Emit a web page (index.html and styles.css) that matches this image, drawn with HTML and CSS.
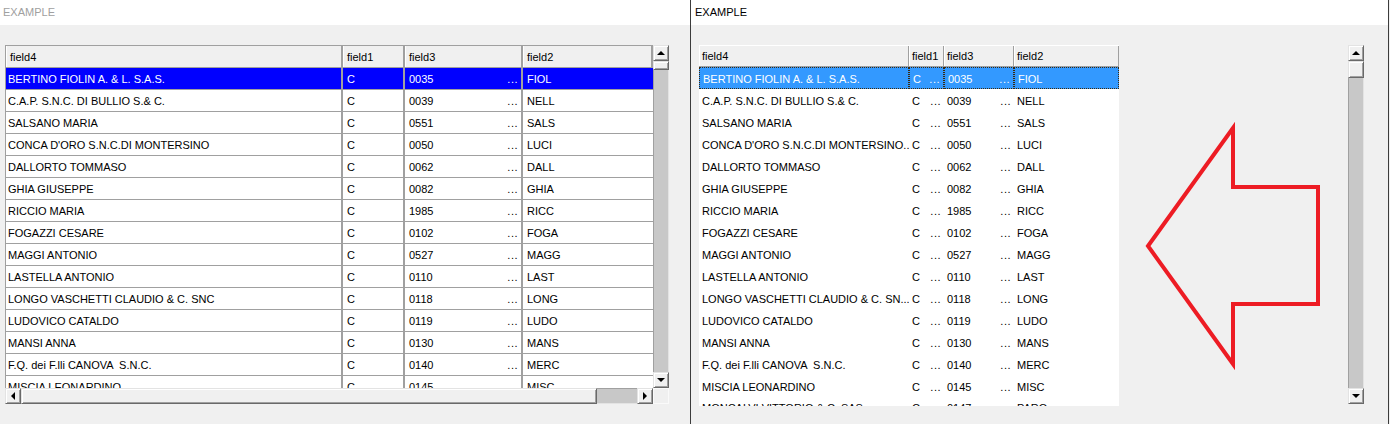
FILE: index.html
```html
<!DOCTYPE html>
<html lang="en">
<head>
  <meta charset="UTF-8" />
  <title>EXAMPLE</title>
  <link rel="stylesheet" href="styles.css">
</head>
<body>
<div class="desktop">

  <section class="window window-left">
    <div class="titlebar inactive">EXAMPLE</div>
    <div class="client client-left">
      <div class="lgrid">
        <div class="lgrid-view">
          <div class="lrow lhead">
            <div class="lcell">field4</div>
            <div class="lcell">field1</div>
            <div class="lcell">field3</div>
            <div class="lcell">field2</div>
          </div>
          <div class="lrow selected">
            <div class="lcell">BERTINO FIOLIN A. &amp; L. S.A.S.</div>
            <div class="lcell">C</div>
            <div class="lcell"><span>0035</span><span class="dots">...</span></div>
            <div class="lcell">FIOL</div>
          </div>
          <div class="lrow">
            <div class="lcell">C.A.P. S.N.C. DI BULLIO S.&amp; C.</div>
            <div class="lcell">C</div>
            <div class="lcell"><span>0039</span><span class="dots">...</span></div>
            <div class="lcell">NELL</div>
          </div>
          <div class="lrow">
            <div class="lcell">SALSANO MARIA</div>
            <div class="lcell">C</div>
            <div class="lcell"><span>0551</span><span class="dots">...</span></div>
            <div class="lcell">SALS</div>
          </div>
          <div class="lrow">
            <div class="lcell">CONCA D'ORO S.N.C.DI MONTERSINO</div>
            <div class="lcell">C</div>
            <div class="lcell"><span>0050</span><span class="dots">...</span></div>
            <div class="lcell">LUCI</div>
          </div>
          <div class="lrow">
            <div class="lcell">DALLORTO TOMMASO</div>
            <div class="lcell">C</div>
            <div class="lcell"><span>0062</span><span class="dots">...</span></div>
            <div class="lcell">DALL</div>
          </div>
          <div class="lrow">
            <div class="lcell">GHIA GIUSEPPE</div>
            <div class="lcell">C</div>
            <div class="lcell"><span>0082</span><span class="dots">...</span></div>
            <div class="lcell">GHIA</div>
          </div>
          <div class="lrow">
            <div class="lcell">RICCIO MARIA</div>
            <div class="lcell">C</div>
            <div class="lcell"><span>1985</span><span class="dots">...</span></div>
            <div class="lcell">RICC</div>
          </div>
          <div class="lrow">
            <div class="lcell">FOGAZZI CESARE</div>
            <div class="lcell">C</div>
            <div class="lcell"><span>0102</span><span class="dots">...</span></div>
            <div class="lcell">FOGA</div>
          </div>
          <div class="lrow">
            <div class="lcell">MAGGI ANTONIO</div>
            <div class="lcell">C</div>
            <div class="lcell"><span>0527</span><span class="dots">...</span></div>
            <div class="lcell">MAGG</div>
          </div>
          <div class="lrow">
            <div class="lcell">LASTELLA ANTONIO</div>
            <div class="lcell">C</div>
            <div class="lcell"><span>0110</span><span class="dots">...</span></div>
            <div class="lcell">LAST</div>
          </div>
          <div class="lrow">
            <div class="lcell">LONGO VASCHETTI CLAUDIO &amp; C. SNC</div>
            <div class="lcell">C</div>
            <div class="lcell"><span>0118</span><span class="dots">...</span></div>
            <div class="lcell">LONG</div>
          </div>
          <div class="lrow">
            <div class="lcell">LUDOVICO CATALDO</div>
            <div class="lcell">C</div>
            <div class="lcell"><span>0119</span><span class="dots">...</span></div>
            <div class="lcell">LUDO</div>
          </div>
          <div class="lrow">
            <div class="lcell">MANSI ANNA</div>
            <div class="lcell">C</div>
            <div class="lcell"><span>0130</span><span class="dots">...</span></div>
            <div class="lcell">MANS</div>
          </div>
          <div class="lrow">
            <div class="lcell">F.Q. dei F.lli CANOVA &nbsp;S.N.C.</div>
            <div class="lcell">C</div>
            <div class="lcell"><span>0140</span><span class="dots">...</span></div>
            <div class="lcell">MERC</div>
          </div>
          <div class="lrow">
            <div class="lcell">MISCIA LEONARDINO</div>
            <div class="lcell">C</div>
            <div class="lcell"><span>0145</span><span class="dots">...</span></div>
            <div class="lcell">MISC</div>
          </div>
        </div>

        <div class="vscroll">
          <div class="sb-btn"><span class="tri tri-up"></span></div>
          <div class="sb-thumb small"></div>
          <div class="sb-track"></div>
          <div class="sb-btn"><span class="tri tri-down"></span></div>
        </div>
        <div class="hscroll">
          <div class="sb-btn"><span class="tri tri-left"></span></div>
          <div class="sb-thumb wide"></div>
          <div class="sb-track"></div>
          <div class="sb-btn"><span class="tri tri-right"></span></div>
        </div>
        <div class="corner"></div>
      </div>
    </div>
  </section>

  <section class="window window-right">
    <div class="titlebar">EXAMPLE</div>
    <div class="client client-right">
      <div class="rgrid">
        <div class="rrow rhead">
          <div class="rcell">field4</div>
          <div class="rcell">field1</div>
          <div class="rcell">field3</div>
          <div class="rcell">field2</div>
        </div>
        <div class="rrow selected">
          <div class="rcell">BERTINO FIOLIN A. &amp; L. S.A.S.</div>
          <div class="rcell"><span>C</span><span class="dots">...</span></div>
          <div class="rcell"><span>0035</span><span class="dots">...</span></div>
          <div class="rcell">FIOL</div>
        </div>
        <div class="rrow">
          <div class="rcell">C.A.P. S.N.C. DI BULLIO S.&amp; C.</div>
          <div class="rcell"><span>C</span><span class="dots">...</span></div>
          <div class="rcell"><span>0039</span><span class="dots">...</span></div>
          <div class="rcell">NELL</div>
        </div>
        <div class="rrow">
          <div class="rcell">SALSANO MARIA</div>
          <div class="rcell"><span>C</span><span class="dots">...</span></div>
          <div class="rcell"><span>0551</span><span class="dots">...</span></div>
          <div class="rcell">SALS</div>
        </div>
        <div class="rrow">
          <div class="rcell">CONCA D'ORO S.N.C.DI MONTERSINO...</div>
          <div class="rcell"><span>C</span><span class="dots">...</span></div>
          <div class="rcell"><span>0050</span><span class="dots">...</span></div>
          <div class="rcell">LUCI</div>
        </div>
        <div class="rrow">
          <div class="rcell">DALLORTO TOMMASO</div>
          <div class="rcell"><span>C</span><span class="dots">...</span></div>
          <div class="rcell"><span>0062</span><span class="dots">...</span></div>
          <div class="rcell">DALL</div>
        </div>
        <div class="rrow">
          <div class="rcell">GHIA GIUSEPPE</div>
          <div class="rcell"><span>C</span><span class="dots">...</span></div>
          <div class="rcell"><span>0082</span><span class="dots">...</span></div>
          <div class="rcell">GHIA</div>
        </div>
        <div class="rrow">
          <div class="rcell">RICCIO MARIA</div>
          <div class="rcell"><span>C</span><span class="dots">...</span></div>
          <div class="rcell"><span>1985</span><span class="dots">...</span></div>
          <div class="rcell">RICC</div>
        </div>
        <div class="rrow">
          <div class="rcell">FOGAZZI CESARE</div>
          <div class="rcell"><span>C</span><span class="dots">...</span></div>
          <div class="rcell"><span>0102</span><span class="dots">...</span></div>
          <div class="rcell">FOGA</div>
        </div>
        <div class="rrow">
          <div class="rcell">MAGGI ANTONIO</div>
          <div class="rcell"><span>C</span><span class="dots">...</span></div>
          <div class="rcell"><span>0527</span><span class="dots">...</span></div>
          <div class="rcell">MAGG</div>
        </div>
        <div class="rrow">
          <div class="rcell">LASTELLA ANTONIO</div>
          <div class="rcell"><span>C</span><span class="dots">...</span></div>
          <div class="rcell"><span>0110</span><span class="dots">...</span></div>
          <div class="rcell">LAST</div>
        </div>
        <div class="rrow">
          <div class="rcell">LONGO VASCHETTI CLAUDIO &amp; C. SN...</div>
          <div class="rcell"><span>C</span><span class="dots">...</span></div>
          <div class="rcell"><span>0118</span><span class="dots">...</span></div>
          <div class="rcell">LONG</div>
        </div>
        <div class="rrow">
          <div class="rcell">LUDOVICO CATALDO</div>
          <div class="rcell"><span>C</span><span class="dots">...</span></div>
          <div class="rcell"><span>0119</span><span class="dots">...</span></div>
          <div class="rcell">LUDO</div>
        </div>
        <div class="rrow">
          <div class="rcell">MANSI ANNA</div>
          <div class="rcell"><span>C</span><span class="dots">...</span></div>
          <div class="rcell"><span>0130</span><span class="dots">...</span></div>
          <div class="rcell">MANS</div>
        </div>
        <div class="rrow">
          <div class="rcell">F.Q. dei F.lli CANOVA &nbsp;S.N.C.</div>
          <div class="rcell"><span>C</span><span class="dots">...</span></div>
          <div class="rcell"><span>0140</span><span class="dots">...</span></div>
          <div class="rcell">MERC</div>
        </div>
        <div class="rrow">
          <div class="rcell">MISCIA LEONARDINO</div>
          <div class="rcell"><span>C</span><span class="dots">...</span></div>
          <div class="rcell"><span>0145</span><span class="dots">...</span></div>
          <div class="rcell">MISC</div>
        </div>
        <div class="rrow">
          <div class="rcell">MONCALVI VITTORIO &amp; C. SAS</div>
          <div class="rcell"><span>C</span><span class="dots">...</span></div>
          <div class="rcell"><span>0147</span><span class="dots">...</span></div>
          <div class="rcell">PARO</div>
        </div>
      </div>

      <div class="vscroll tall">
        <div class="sb-btn"><span class="tri tri-up"></span></div>
        <div class="sb-thumb"></div>
        <div class="sb-track"></div>
        <div class="sb-btn"><span class="tri tri-down"></span></div>
      </div>
    </div>
  </section>

  <!-- red arrow drawn on top of the screenshot -->
  <svg class="annotation" width="1390" height="424" viewBox="0 0 1390 424">
    <polygon points="1148,246 1233,128 1233,187 1318,187 1318,304 1233,304 1233,364"
             fill="none" stroke="#ed1c24" stroke-width="4" stroke-linejoin="miter" />
  </svg>

</div>
</body>
</html>
```

FILE: styles.css
```css
body {
  margin: 0;
  background: #f0f0f0;
  font-family: "Liberation Sans", Arial, sans-serif;
  font-size: 11px;
  color: #000;
}

.desktop {
  position: relative;
  display: flex;
  width: 1390px;
  height: 424px;
  overflow: hidden;
}

.window {
  display: flex;
  flex-direction: column;
  height: 424px;
  background: #f0f0f0;
  box-sizing: border-box;
}

.window-left {
  width: 690px;
}

.window-right {
  width: 699px;
  border-left: 1px solid #3c3c3c;
  border-right: 1px solid #3c3c3c;
}

.titlebar {
  height: 25px;
  line-height: 24px;
  background: #fff;
  padding-left: 4px;
  font-size: 11px;
  color: #000;
}

.titlebar.inactive {
  color: #a0a0a0;
  padding-left: 3px;
}

.client {
  flex: 1;
  display: flex;
}

.client-left {
  padding: 20px 0 0 5px;
}

.client-right {
  padding: 20px 24px 0 8px;
  justify-content: space-between;
  align-items: flex-start;
}

/* ---------- left grid (classic look) ---------- */

.lgrid {
  display: grid;
  grid-template-columns: 648px 16px;
  grid-template-rows: 343px 16px;
}

.lgrid-view {
  overflow: hidden;
  background: #fff;
  border-left: 1px solid #a0a0a0;
  box-sizing: border-box;
}

.lrow {
  display: grid;
  grid-template-columns: 337px 62px 118px 130px;
  height: 22px;
  box-sizing: border-box;
  border-bottom: 1px solid #a0a0a0;
}

.lcell {
  display: flex;
  align-items: center;
  justify-content: space-between;
  padding: 1px 3px 0 4px;
  border-right: 2px solid #a0a0a0;
  white-space: nowrap;
  overflow: hidden;
}

.lrow .lcell:first-child {
  padding-left: 2px;
}

.lrow .lcell:last-child {
  border-right: none;
}

.lhead {
  height: 23px;
  background: #f0f0f0;
  border-top: 1px solid #a0a0a0;
}

.lhead .lcell {
  box-shadow: inset 1px 0 #fff;
  padding: 0 3px 0 4px;
}

.lhead .lcell:first-child {
  padding-left: 4px;
}

.lhead .lcell:last-child {
  border-right: 2px solid #a0a0a0;
}

.lrow.selected {
  background: #0000ff;
  color: #fff;
}

.dots {
  letter-spacing: 0.5px;
}

/* ---------- scrollbars ---------- */

.vscroll {
  display: flex;
  flex-direction: column;
  width: 16px;
}

.vscroll.tall {
  height: 359px;
}

.hscroll {
  display: flex;
  height: 16px;
}

.sb-btn,
.sb-thumb {
  flex: none;
  width: 16px;
  height: 16px;
  box-sizing: border-box;
  background: #f0f0f0;
  border: 1px solid;
  border-color: #e3e3e3 #696969 #696969 #e3e3e3;
  box-shadow: inset 1px 1px #fff, inset -1px -1px #a0a0a0;
  display: flex;
  align-items: center;
  justify-content: center;
}

.sb-thumb {
  height: 17px;
}

.sb-thumb.small {
  height: 9px;
}

.hscroll .sb-thumb.wide {
  width: 576px;
  height: 16px;
}

.sb-track {
  flex: 1;
  background: #c8c8c8;
  box-shadow: inset 1px 0 #a0a0a0, inset -1px 0 #e3e3e3;
}

.hscroll .sb-track {
  box-shadow: inset 0 1px #a0a0a0, inset 0 -1px #e3e3e3;
}

.corner {
  background: #f0f0f0;
  box-sizing: border-box;
  border: 1px solid #fafafa;
}

.tri {
  width: 0;
  height: 0;
  border: 4px solid transparent;
}

.tri-up {
  border-bottom-color: #000;
  border-top-width: 0;
}

.tri-down {
  border-top-color: #000;
  border-bottom-width: 0;
}

.tri-left {
  border-right-color: #000;
  border-left-width: 0;
}

.tri-right {
  border-left-color: #000;
  border-right-width: 0;
}

/* ---------- right grid (themed look) ---------- */

.rgrid {
  width: 420px;
  height: 361px;
  background: #fff;
  overflow: hidden;
}

.rrow {
  display: grid;
  grid-template-columns: 210px 35px 70px 105px;
  height: 22px;
}

.rcell {
  display: flex;
  align-items: center;
  justify-content: space-between;
  padding: 1px 3px 0 3px;
  white-space: nowrap;
  overflow: hidden;
  box-sizing: border-box;
}

.rrow:last-child .rcell {
  padding-top: 0;
}

.rhead {
  background: #f0f0f0;
  box-sizing: border-box;
  border-bottom: 1px solid #a0a0a0;
  border-top: 1px solid #fff;
}

.rhead .rcell {
  padding-top: 0;
  border-right: 1px solid #a0a0a0;
  box-shadow: inset 1px 0 #fff;
}

.rrow.selected {
  background: #3399ff;
  color: #fff;
}

.rrow.selected .rcell {
  border: 1px dotted #3a2a10;
}

.annotation {
  position: absolute;
  left: 0;
  top: 0;
  pointer-events: none;
}
```
